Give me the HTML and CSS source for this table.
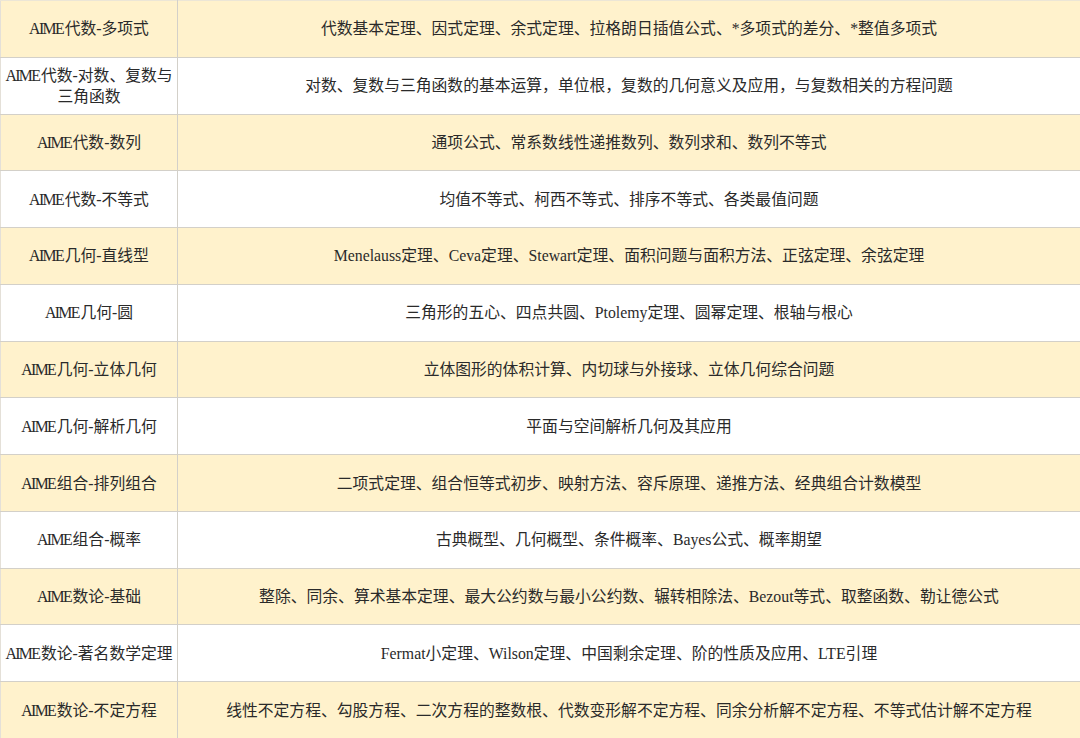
FILE: index.html
```html
<!DOCTYPE html>
<html lang="zh-CN">
<head>
<meta charset="utf-8">
<title>AIME 知识点</title>
<link rel="stylesheet" href="styles.css">
</head>
<body>
<table class="topics">
  <colgroup><col class="c-name"><col class="c-desc"></colgroup>
  <tbody>
    <tr class="alt"><td class="name"><span class="lat">AIME</span>代数-多项式</td><td>代数基本定理、因式定理、余式定理、拉格朗日插值公式、*多项式的差分、*整值多项式</td></tr>
    <tr><td class="name"><span class="lat">AIME</span>代数-对数、复数与<br>三角函数</td><td>对数、复数与三角函数的基本运算，单位根，复数的几何意义及应用，与复数相关的方程问题</td></tr>
    <tr class="alt"><td class="name"><span class="lat">AIME</span>代数-数列</td><td>通项公式、常系数线性递推数列、数列求和、数列不等式</td></tr>
    <tr><td class="name"><span class="lat">AIME</span>代数-不等式</td><td>均值不等式、柯西不等式、排序不等式、各类最值问题</td></tr>
    <tr class="alt"><td class="name"><span class="lat">AIME</span>几何-直线型</td><td>Menelauss定理、Ceva定理、Stewart定理、面积问题与面积方法、正弦定理、余弦定理</td></tr>
    <tr><td class="name"><span class="lat">AIME</span>几何-圆</td><td>三角形的五心、四点共圆、Ptolemy定理、圆幂定理、根轴与根心</td></tr>
    <tr class="alt"><td class="name"><span class="lat">AIME</span>几何-立体几何</td><td>立体图形的体积计算、内切球与外接球、立体几何综合问题</td></tr>
    <tr><td class="name"><span class="lat">AIME</span>几何-解析几何</td><td>平面与空间解析几何及其应用</td></tr>
    <tr class="alt"><td class="name"><span class="lat">AIME</span>组合-排列组合</td><td>二项式定理、组合恒等式初步、映射方法、容斥原理、递推方法、经典组合计数模型</td></tr>
    <tr><td class="name"><span class="lat">AIME</span>组合-概率</td><td>古典概型、几何概型、条件概率、Bayes公式、概率期望</td></tr>
    <tr class="alt"><td class="name"><span class="lat">AIME</span>数论-基础</td><td>整除、同余、算术基本定理、最大公约数与最小公约数、辗转相除法、Bezout等式、取整函数、勒让德公式</td></tr>
    <tr><td class="name"><span class="lat">AIME</span>数论-著名数学定理</td><td>Fermat小定理、Wilson定理、中国剩余定理、阶的性质及应用、LTE引理</td></tr>
    <tr class="alt"><td class="name"><span class="lat">AIME</span>数论-不定方程</td><td>线性不定方程、勾股方程、二次方程的整数根、代数变形解不定方程、同余分析解不定方程、不等式估计解不定方程</td></tr>
  </tbody>
</table>
</body>
</html>
```

FILE: styles.css
```css
html, body {
  margin: 0;
  padding: 0;
  background: #ffffff;
}

.topics {
  width: 1080px;
  height: 738px;
  border-collapse: collapse;
  table-layout: fixed;
  font-family: "Liberation Serif", "Noto Sans CJK SC", serif;
  font-size: 15.8px;
  color: #2a2a2a;
}

.c-name { width: 177px; }

.topics tr { height: 56.77px; }

.topics td {
  border: 1px solid #d3d0c9;
  text-align: center;
  vertical-align: middle;
  padding: 0 2px;
  line-height: 21px;
  white-space: nowrap;
}

.topics tr:first-child td { border-top-color: #ece6d6; }
.topics td:first-child { border-left-color: #e4e0d8; }
.topics td:last-child { border-right: none; }

.topics .alt td { background: #fff2cc; }

.name .lat {
  letter-spacing: -1.6px;
  margin-right: 1.6px;
}
```
